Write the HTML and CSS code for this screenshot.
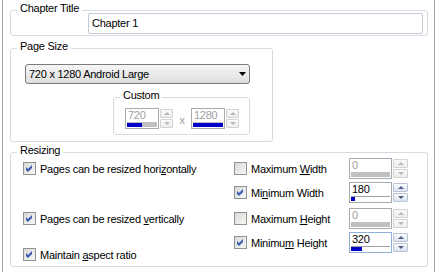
FILE: index.html
```html
<!DOCTYPE html>
<html>
<head>
<meta charset="utf-8">
<link rel="stylesheet" href="styles.css">
</head>
<body>
<div class="panel">
  <fieldset class="group g-title">
    <legend>Chapter Title</legend>
    <div class="title-body">
      <div class="textbox">Chapter 1</div>
    </div>
  </fieldset>

  <fieldset class="group g-size">
    <legend>Page Size</legend>
    <div class="size-body">
      <div class="select">
        <span>720 x 1280 Android Large</span>
        <svg class="arrow" width="7" height="4" viewBox="0 0 7 4"><path d="M0 0H7L3.5 4Z" fill="#000"/></svg>
      </div>
      <fieldset class="group g-custom">
        <legend>Custom</legend>
        <div class="custom-body">
          <div class="spin small">
            <div class="field dis"><span class="val">720</span><div class="bar"><i style="width:15px"></i></div></div>
            <div class="btns dis"><b class="up"></b><b class="down"></b></div>
          </div>
          <span class="times">x</span>
          <div class="spin small">
            <div class="field dis"><span class="val">1280</span><div class="bar"><i style="width:100%"></i></div></div>
            <div class="btns dis"><b class="up"></b><b class="down"></b></div>
          </div>
        </div>
      </fieldset>
    </div>
  </fieldset>

  <fieldset class="group g-resize">
    <legend>Resizing</legend>
    <div class="resize-body">
      <div class="left-col">
        <div class="row r1"><span class="cb on"></span><span class="lbl">Pages can be resized hori<u>z</u>ontally</span></div>
        <div class="row r3"><span class="cb on"></span><span class="lbl">Pages can be resized <u>v</u>ertically</span></div>
        <div class="row r5"><span class="cb on"></span><span class="lbl">Maintain <u>a</u>spect ratio</span></div>
      </div>
      <div class="right-col">
        <div class="row">
          <div class="opt"><span class="cb"></span><span class="lbl">Maximum <u>W</u>idth</span></div>
          <div class="spin wide">
            <div class="field dis"><span class="val">0</span><div class="bar"><i style="width:0"></i></div></div>
            <div class="btns dis"><b class="up"></b><b class="down"></b></div>
          </div>
        </div>
        <div class="row r2">
          <div class="opt"><span class="cb on"></span><span class="lbl">Mi<u>n</u>imum Width</span></div>
          <div class="spin wide">
            <div class="field"><span class="val">180</span><div class="bar"><i style="width:4px"></i></div></div>
            <div class="btns"><b class="up"></b><b class="down"></b></div>
          </div>
        </div>
        <div class="row r3b">
          <div class="opt"><span class="cb"></span><span class="lbl">Maximum <u>H</u>eight</span></div>
          <div class="spin wide">
            <div class="field dis"><span class="val">0</span><div class="bar"><i style="width:0"></i></div></div>
            <div class="btns dis"><b class="up"></b><b class="down"></b></div>
          </div>
        </div>
        <div class="row r2">
          <div class="opt"><span class="cb on"></span><span class="lbl">Minimu<u>m</u> Height</span></div>
          <div class="spin wide">
            <div class="field focus"><span class="val">320</span><div class="bar"><i style="width:11px"></i></div></div>
            <div class="btns"><b class="up"></b><b class="down"></b></div>
          </div>
        </div>
      </div>
    </div>
  </fieldset>
</div>
</body>
</html>
```
FILE: styles.css
```css
html, body {
  margin: 0;
  padding: 0;
  background: #fff;
}
body {
  font-family: "Liberation Sans", Arial, sans-serif;
  font-size: 11px;
  letter-spacing: -0.25px;
  color: #000;
}
.panel {
  margin-left: 2px;
  width: 418px;
  height: 270px;
  padding: 2px 6px 0 7px;
  border-left: 1px solid #a0a0a0;
  border-right: 1px solid #a0a0a0;
  overflow: hidden;
}
.group {
  margin: 0;
  padding: 0;
  border: 1px solid #d5dbe1;
  border-radius: 3px;
  min-width: 0;
}
.group > legend {
  margin-left: 6px;
  padding: 0 3px 4px;
  line-height: 13px;
}
/* chapter title */
.title-body {
  display: flex;
  justify-content: flex-end;
  margin-top: -6px;
  padding: 0 4px 1px 0;
}
.textbox {
  box-sizing: border-box;
  width: 335px;
  height: 21px;
  border: 1px solid #c3cbd4;
  border-radius: 2px;
  padding: 0 3px;
  line-height: 19px;
}
/* page size */
.g-size {
  width: 263px;
  box-sizing: border-box;
  margin-top: 4px;
}
.size-body {
  padding: 7px 0 6px 14px;
}
.select {
  box-sizing: border-box;
  width: 225px;
  height: 20px;
  border: 1px solid #7b7b7b;
  border-radius: 3px;
  background: linear-gradient(#f6f6f6, #dedede);
  display: flex;
  align-items: center;
  justify-content: space-between;
  padding: 0 3px 0 3px;
}
.arrow {
  display: block;
}
.g-custom {
  box-sizing: border-box;
  width: 137px;
  margin: 5px 0 0 88px;
}
.custom-body {
  display: flex;
  align-items: center;
  padding: 2px 0 5px 11px;
}
.times {
  width: 18px;
  text-align: center;
  color: #a0a0a0;
  padding-top: 3px;
}
/* spinner */
.spin {
  display: flex;
  gap: 1px;
  height: 21px;
}
.field {
  box-sizing: border-box;
  border: 1px solid #a5acb2;
  display: flex;
  flex-direction: column;
  padding: 0 1px 1px;
  background: #fff;
}
.spin.small .field { width: 34px; }
.spin.wide .field { width: 43px; }
.field.focus { border-color: #8fb0d8; }
.val {
  line-height: 13px;
  height: 13px;
  padding-left: 1px;
}
.field.dis .val { color: #a0a0a0; }
.bar {
  margin-top: auto;
  height: 4px;
  border-top: 1px solid #a0a0a0;
}
.field.dis .bar {
  background: #c0c0c0;
  border-top-color: #c0c0c0;
}
.bar i {
  display: block;
  height: 4px;
  background: #0000c8;
}
.btns {
  display: flex;
  flex-direction: column;
  gap: 1px;
  padding: 1px 0;
}
.spin.small .btns { width: 13px; }
.spin.wide .btns { width: 15px; }
.btns b {
  flex: 1;
  box-sizing: border-box;
  border: 1px solid #b9c3d3;
  border-radius: 1px;
  background: linear-gradient(#fbfcfe, #dbe2ef);
  display: flex;
  align-items: center;
  justify-content: center;
}
.btns b::after {
  content: "";
  border-left: 3px solid transparent;
  border-right: 3px solid transparent;
}
.btns b.up::after { border-bottom: 3px solid #4d6185; }
.btns b.down::after { border-top: 3px solid #4d6185; }
.btns.dis b {
  border-color: #d2d2d2;
  background: linear-gradient(#fafafa, #eeeeee);
}
.btns.dis b.up::after { border-bottom-color: #b8b8b8; }
.btns.dis b.down::after { border-top-color: #b8b8b8; }
/* resizing */
.g-resize {
  margin-top: 2px;
}
.resize-body {
  display: flex;
  margin-top: -3px;
  padding: 0 0 1px 12px;
}
.left-col {
  width: 211px;
  display: flex;
  flex-direction: column;
}
.right-col {
  display: flex;
  flex-direction: column;
}
.row {
  display: flex;
  align-items: center;
  height: 21px;
}
.left-col .r3 { margin-top: 29px; }
.left-col .r5 { margin-top: 15px; }
.right-col .r2 { margin-top: 3px; }
.right-col .r3b { margin-top: 5px; }
.opt {
  width: 115px;
  display: flex;
  align-items: center;
}
.cb {
  box-sizing: border-box;
  width: 13px;
  height: 13px;
  flex: none;
  border: 1px solid #8f9397;
  background: linear-gradient(135deg, #d9d9d4, #f7f7f5);
  position: relative;
}
.cb.on::after {
  content: "";
  position: absolute;
  left: 1px;
  top: 1px;
  width: 9px;
  height: 9px;
  background: #3a5ab4;
  clip-path: polygon(11% 33%, 33% 56%, 78% 11%, 78% 44%, 33% 89%, 11% 67%);
}
.lbl {
  margin-left: 4px;
  white-space: nowrap;
}
u {
  text-decoration: underline;
  text-underline-offset: 1px;
}
```
